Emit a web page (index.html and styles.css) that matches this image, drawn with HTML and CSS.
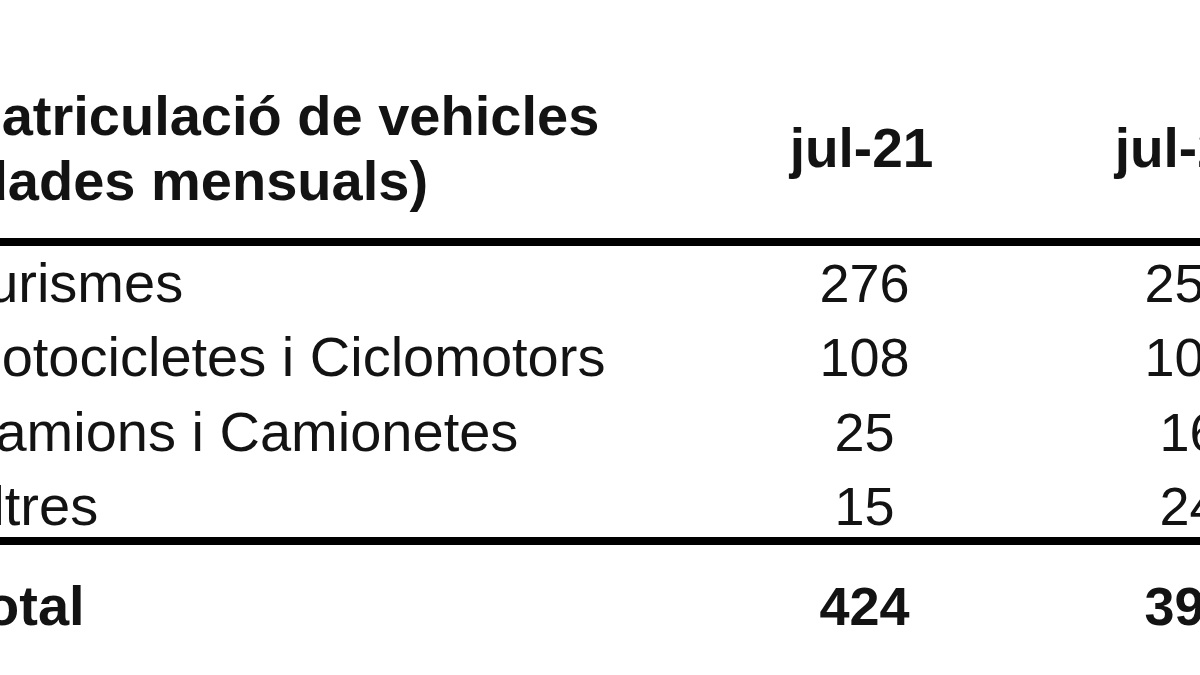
FILE: index.html
```html
<!DOCTYPE html>
<html lang="ca">
<head>
<meta charset="utf-8">
<title>Matriculació de vehicles</title>
<link rel="stylesheet" href="styles.css">
</head>
<body>
<main class="sheet">
  <div class="table">
    <div class="row head">
      <div class="label">Matriculació de vehicles (dades mensuals)</div>
      <div class="val">jul-21</div>
      <div class="val">jul-22</div>
    </div>
    <div class="rule"></div>
    <div class="rows">
      <div class="row"><div class="label">Turismes</div><div class="val">276</div><div class="val">254</div></div>
      <div class="row"><div class="label">Motocicletes i Ciclomotors</div><div class="val">108</div><div class="val">103</div></div>
      <div class="row"><div class="label">Camions i Camionetes</div><div class="val">25</div><div class="val">16</div></div>
      <div class="row"><div class="label">Altres</div><div class="val">15</div><div class="val">24</div></div>
    </div>
    <div class="rule"></div>
    <div class="row total">
      <div class="label">Total</div><div class="val">424</div><div class="val">397</div>
    </div>
  </div>
</main>
</body>
</html>
```
FILE: styles.css
```css
html, body {
  margin: 0;
  padding: 0;
  background: #ffffff;
}

.sheet {
  width: 1200px;
  height: 675px;
  overflow: hidden;
  font-family: "Liberation Sans", Arial, sans-serif;
  color: #131313;
  font-size: 56px;
}

.table {
  margin-left: -45px;
  padding-top: 83px;
  width: 1397px;
}

.row {
  display: grid;
  grid-template-columns: 747px 325px 325px;
  line-height: 62px;
  white-space: nowrap;
}

.val {
  text-align: center;
  font-size: 54px;
}

.head {
  font-weight: bold;
  align-items: center;
}

.head .label {
  white-space: normal;
  line-height: 65px;
}

.head .val {
  font-size: 55px;
  padding-right: 6px;
}

.rule {
  height: 8px;
  background: #000000;
}

.head + .rule {
  margin-top: 25px;
}

.rows {
  display: flex;
  flex-direction: column;
  gap: 12.3px;
  padding-top: 6px;
}

.total {
  font-weight: bold;
  margin-top: 30px;
}
```
